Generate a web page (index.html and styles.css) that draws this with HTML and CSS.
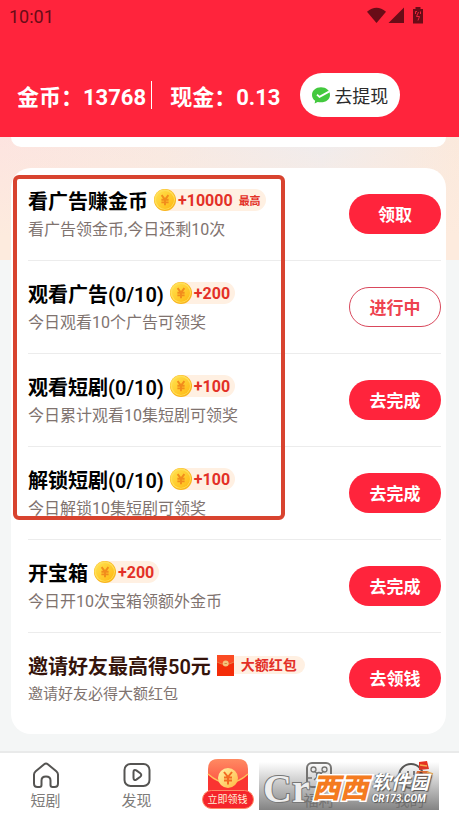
FILE: index.html
```html
<!DOCTYPE html>
<html lang="zh-CN">
<head>
<meta charset="utf-8">
<meta name="viewport" content="width=device-width, initial-scale=1">
<title>任务中心</title>
<link rel="stylesheet" href="styles.css">
</head>
<body>
<svg class="defs" width="0" height="0" aria-hidden="true">
  <defs>
    <linearGradient id="gold" x1="0" y1="0" x2="1" y2="1"><stop offset="0" stop-color="#ffe14d"/><stop offset="1" stop-color="#ffb812"/></linearGradient>
    <linearGradient id="envelope" x1="0" y1="0" x2="0" y2="1"><stop offset="0" stop-color="#ff8a62"/><stop offset="1" stop-color="#fb2a2c"/></linearGradient>
    <linearGradient id="cream" x1="0" y1="0" x2="1" y2="1"><stop offset="0" stop-color="#fff3a8"/><stop offset="1" stop-color="#ffb740"/></linearGradient>
    <symbol id="coin" viewBox="0 0 22 22">
      <circle cx="11" cy="11" r="11" fill="#f9b51c"/>
      <circle cx="10.6" cy="10.5" r="10.3" fill="#ffdf58"/>
      <circle cx="11" cy="11" r="9" fill="url(#gold)"/>
      <path d="M7.6 6.2l3.4 4.4 3.4-4.4M11 10.6v5.6M7.4 10.8h7.2M7.4 13.4h7.2" fill="none" stroke="#f28c1c" stroke-width="1.9"/>
    </symbol>
  </defs>
</svg>

<header class="header">
  <div class="status">
    <span>10:01</span>
    <svg class="status-icons" width="58" height="18" viewBox="0 0 58 18" fill="#690c17" aria-hidden="true">
      <path d="M0 4.8Q9.5-3.4 19 4.8L9.500 16z"/>
      <path d="M21.500 16L37 .5V16z"/>
      <path d="M46 2h2.500V0h5v2H56v14.500H46z"/>
      <path d="M48.500 7V4.500H50M53.500 4.500v2.500M51.500 5l-2 4.500h3l-1.500 4" fill="none" stroke="#f0223a" stroke-width="1"/>
    </svg>
  </div>
  <div class="balance">
    <span class="coins">金币：13768</span>
    <span class="cash">现金：0.13</span>
    <button class="withdraw" type="button">
      <svg width="18" height="17" viewBox="0 0 18 17" aria-hidden="true"><path d="M9 .3C3.900.300 0 3.600 0 7.900c0 2.500 1.200 4.500 3.200 5.900L2.600 16.500l3.100-1.600c1 .3 2.200.4 3.300.4 5.100 0 9-3.200 9-7.400S14.100.3 9 .3z" fill="#43c93e"/><path d="M5 7.600l2.500 2.300L17 4.600" fill="none" stroke="#fff" stroke-width="1.800"/></svg>
      去提现
    </button>
  </div>
</header>

<main class="content">
  <div class="previous-card"></div>
  <section class="tasks">
    <article class="task">
      <div class="info">
        <h2>看广告赚金币 <span class="reward"><svg aria-hidden="true"><use href="#coin"/></svg>+10000<small>最高</small></span></h2>
        <p>看广告领金币,今日还剩10次</p>
      </div>
      <button class="action" type="button">领取</button>
    </article>
    <article class="task">
      <div class="info">
        <h2>观看广告(0/10) <span class="reward"><svg aria-hidden="true"><use href="#coin"/></svg>+200</span></h2>
        <p>今日观看10个广告可领奖</p>
      </div>
      <button class="action pending" type="button">进行中</button>
    </article>
    <article class="task">
      <div class="info">
        <h2>观看短剧(0/10) <span class="reward"><svg aria-hidden="true"><use href="#coin"/></svg>+100</span></h2>
        <p>今日累计观看10集短剧可领奖</p>
      </div>
      <button class="action" type="button">去完成</button>
    </article>
    <article class="task">
      <div class="info">
        <h2>解锁短剧(0/10) <span class="reward"><svg aria-hidden="true"><use href="#coin"/></svg>+100</span></h2>
        <p>今日解锁10集短剧可领奖</p>
      </div>
      <button class="action" type="button">去完成</button>
    </article>
    <article class="task">
      <div class="info">
        <h2>开宝箱 <span class="reward"><svg aria-hidden="true"><use href="#coin"/></svg>+200</span></h2>
        <p>今日开10次宝箱领额外金币</p>
      </div>
      <button class="action" type="button">去完成</button>
    </article>
    <article class="task invite">
      <div class="info">
        <h2>邀请好友最高得50元
          <span class="packet">
            <svg width="17" height="21" viewBox="0 0 17 21" aria-hidden="true"><path fill="#f42c08" d="M0 0h17v21H0z"/><path fill="#fb4b23" d="M0 0h17v7Q8.500 12 0 7z"/><path d="M0 7q8.500 5 17 0" fill="none" stroke="#e58b4c" stroke-width=".8"/><circle cx="8.700" cy="8.500" r="3" fill="#f3c17b"/><path d="M7.500 8.500h2.400" stroke="#d58a40"/></svg>
            <span class="packet-label">大额红包</span>
          </span>
        </h2>
        <p>邀请好友必得大额红包</p>
      </div>
      <button class="action" type="button">去领钱</button>
    </article>
    <div class="highlight"></div>
  </section>
</main>

<nav class="tabs">
  <a href="#home">
    <svg width="28" height="28" viewBox="0 0 28 28" fill="none" stroke="#555452" stroke-width="2" stroke-linejoin="round" aria-hidden="true"><path d="M12.200 3.200Q14 1.700 15.800 3.200L24.300 10.200Q26 11.600 26 13.600V22.500Q26 26 22.500 26H20.500Q18.500 26 18.500 24V19.500Q18.500 15.500 14 15.500T9.500 19.500V24Q9.500 26 7.500 26H5.500Q2 26 2 22.500V13.600Q2 11.600 3.700 10.200z"/></svg>
    短剧
  </a>
  <a href="#discover">
    <svg width="28" height="28" viewBox="0 0 28 28" fill="none" stroke="#555452" stroke-width="2" stroke-linejoin="round" aria-hidden="true"><rect x="1.500" y="3" width="25" height="22" rx="6"/><path d="M10.500 11.200c0-2 1.200-2.700 2.800-1.800l4 2.900c1.300 1 1.300 2.400 0 3.400l-4 2.900c-1.600.9-2.800.2-2.800-1.800z"/></svg>
    发现
  </a>
  <a class="earn" href="#earn">
    <svg width="42" height="44" viewBox="0 0 42 44" aria-hidden="true"><path d="M1 44V11Q1 1 11 1h20q10 0 10 10v33z" fill="url(#envelope)"/><path d="M1 16q20 18 40 0v28H1z" fill="#fa3431"/><path d="M1 16q20 18 40 0" fill="none" stroke="#ffc05c" stroke-width="1.500"/><circle cx="21" cy="20" r="10" fill="url(#cream)"/><path d="M17 14l4 5 4-5M21 19v7.500M17 19.500h8M17 22.500h8" fill="none" stroke="#f36a21" stroke-width="2"/></svg>
    <span>立即领钱</span>
  </a>
  <a href="#welfare">
    <svg width="28" height="28" viewBox="0 0 28 28" fill="none" stroke="#777674" stroke-width="2" aria-hidden="true"><rect x="2" y="2" width="24" height="24" rx="5"/><g stroke-width="1.300"><path d="M2 17h5M21 17h5M14 18v8M14 14l-5-4M14 14l5-4M14 14l-5 5M14 14l5 5"/><circle cx="8.500" cy="8.500" r="2.500"/><circle cx="19.500" cy="8.500" r="2.500"/><circle cx="14" cy="14" r="2.500"/></g></svg>
    福利
  </a>
  <a href="#mine">
    <svg class="mine" width="38" height="28" viewBox="0 0 38 28" fill="none" aria-hidden="true"><circle cx="14" cy="15" r="12" fill="#fff" stroke="#555452" stroke-width="2"/><path d="M11 10v4M17 10v4" stroke="#555452" stroke-width="1.500"/><path d="M22 1l8-1 2 8-10 1z" fill="#e8301f"/><path d="M20 10h11l4 7-9 3-8-4z" fill="#f36b28"/><circle cx="24" cy="13" r="2" fill="#5c2015"/><path d="M23 4l7 1M30 11l6 2" stroke="#ffb24d" stroke-width="1.500"/></svg>
    我的
  </a>
  <div class="watermark">
    <span class="mark-logo">Cr</span>
    <span class="mark-orange">西西</span>
    <span class="mark-site"><b>软件园</b><i>CR173.COM</i></span>
  </div>
</nav>
</body>
</html>
```
FILE: styles.css
```css
* { box-sizing: border-box; }

body {
  margin: 0;
  min-height: 100vh;
  display: flex;
  flex-direction: column;
  background: #f4f6f6;
  font-family: Roboto, "Noto Sans CJK SC", sans-serif;
  color: #000;
}

button { border: 0; font-family: inherit; cursor: pointer; }
a { color: inherit; text-decoration: none; }
h2, p { margin: 0; }
.defs { position: absolute; }

.header {
  background: #ff243c;
  color: #fff;
  padding-bottom: 20px;
}

.status {
  display: flex;
  align-items: center;
  justify-content: space-between;
  height: 32px;
  padding: 0 34px 0 9px;
  color: #690c17;
  font-size: 18px;
}

.balance {
  display: flex;
  align-items: center;
  margin-top: 41px;
  padding-left: 17px;
  font-size: 22px;
  line-height: 22px;
  font-weight: 700;
  white-space: nowrap;
}

.coins, .cash { padding-top: 6px; }

.coins {
  padding-right: 5px;
  border-right: 1px solid #fff;
}

.cash { padding-left: 18px; }

.withdraw {
  display: flex;
  align-items: center;
  justify-content: center;
  gap: 4px;
  width: 100px;
  height: 44px;
  margin-left: 20px;
  padding: 0;
  border-radius: 22px;
  background: #fff;
  color: #2b2b2b;
  font-size: 18px;
}

.content {
  flex: 1;
  padding: 0 13px 17px 11px;
  background: linear-gradient(to bottom, transparent, #fdebde 100px) 0 0 / 100% 123px no-repeat,
    linear-gradient(to right, #fde4e0, #f8e9e2 35%, #efecee 70%, #fbe9dc) 0 0 / 100% 123px no-repeat,
    #f4f6f6;
}

.previous-card {
  height: 10px;
  border-radius: 0 0 20px 20px;
  background: #fff;
}

.tasks {
  position: relative;
  margin-top: 21px;
  padding: 0 5px 11px 17px;
  border-radius: 20px;
  background: #fff;
}

.task {
  display: flex;
  align-items: center;
  justify-content: space-between;
  padding: 18px 0;
  border-bottom: 1px solid #ececec;
}

.task h2 {
  display: flex;
  align-items: center;
  gap: 6px;
  height: 28px;
  font-size: 20px;
  font-weight: 600;
  white-space: nowrap;
}

.task p {
  margin-top: 4px;
  color: #80736f;
  font-size: 16px;
  font-weight: 400;
  line-height: 24px;
}

.reward {
  display: flex;
  align-items: center;
  gap: 2px;
  height: 22px;
  padding-right: 5px;
  border-radius: 11px;
  background: #fff0e2;
  color: #e33027;
  font-size: 16px;
  font-weight: 700;
}

.reward svg { width: 22px; height: 22px; }
.reward small { margin-left: 4px; font-size: 11px; }

.action {
  flex: none;
  width: 92px;
  height: 40px;
  padding: 0 0 2px;
  border-radius: 20px;
  background: #ff243c;
  color: #fff;
  font-size: 17px;
  font-weight: 700;
}

.action.pending {
  border: 1px solid #d9485c;
  background: #fff;
  color: #ee4350;
}

.invite { border: 0; }
.invite h2 { color: #35140b; }
.invite p { font-size: 15px; line-height: 22px; }

.packet { display: flex; align-items: center; }

.packet-label {
  padding: 0 8px 0 7px;
  border-radius: 0 9px 9px 0;
  background: #fff0e2;
  color: #e33027;
  font-size: 14px;
  line-height: 18px;
  font-weight: 700;
}

.highlight {
  position: absolute;
  top: 7px;
  left: 2px;
  width: 272px;
  height: 345px;
  border: 4px solid #d8432f;
  border-radius: 6px;
  pointer-events: none;
}

.tabs {
  position: relative;
  display: grid;
  grid-template-columns: repeat(5, 1fr);
  height: 69px;
  padding: 8px 4px 0 0;
  border-top: 2px solid #e9eaea;
  background: #fff;
  color: #7d7b79;
  font-size: 15px;
  line-height: 24px;
}

.tabs a {
  display: flex;
  flex-direction: column;
  align-items: center;
}

.mine { margin-left: 12px; }

.tabs .earn { margin-top: -3px; }

.earn span {
  margin-top: -12px;
  padding: 0 5px;
  border: 1px solid #ff8b65;
  border-radius: 10px;
  background: #f5252b;
  color: #fff0d8;
  font-size: 10px;
  line-height: 17px;
}

.watermark {
  position: absolute;
  right: 20px;
  bottom: 10px;
  display: flex;
  align-items: center;
  width: 180px;
  height: 48px;
  padding: 6px 0 0 4px;
  background: linear-gradient(to bottom, rgba(150, 150, 150, 0), rgba(110, 110, 110, .85));
  white-space: nowrap;
  pointer-events: none;
}

.mark-logo {
  width: 49px;
  color: #eee;
  font: 700 40px/40px "Liberation Serif", serif;
  paint-order: stroke fill;
  -webkit-text-stroke: 2px #777;
}

.mark-orange {
  color: #f47b20;
  font-size: 28px;
  font-style: italic;
  font-weight: 900;
  line-height: 30px;
  paint-order: stroke fill;
  -webkit-text-stroke: 3px #fff;
}

.mark-site {
  display: flex;
  flex-direction: column;
  margin-left: 4px;
  color: #fff;
  text-shadow: 1px 1px 1px #555, -1px 0 1px #777;
}

.mark-site b { font-size: 19px; font-style: italic; line-height: 20px; }
.mark-site i { font-size: 10px; font-weight: 700; line-height: 12px; }
```
